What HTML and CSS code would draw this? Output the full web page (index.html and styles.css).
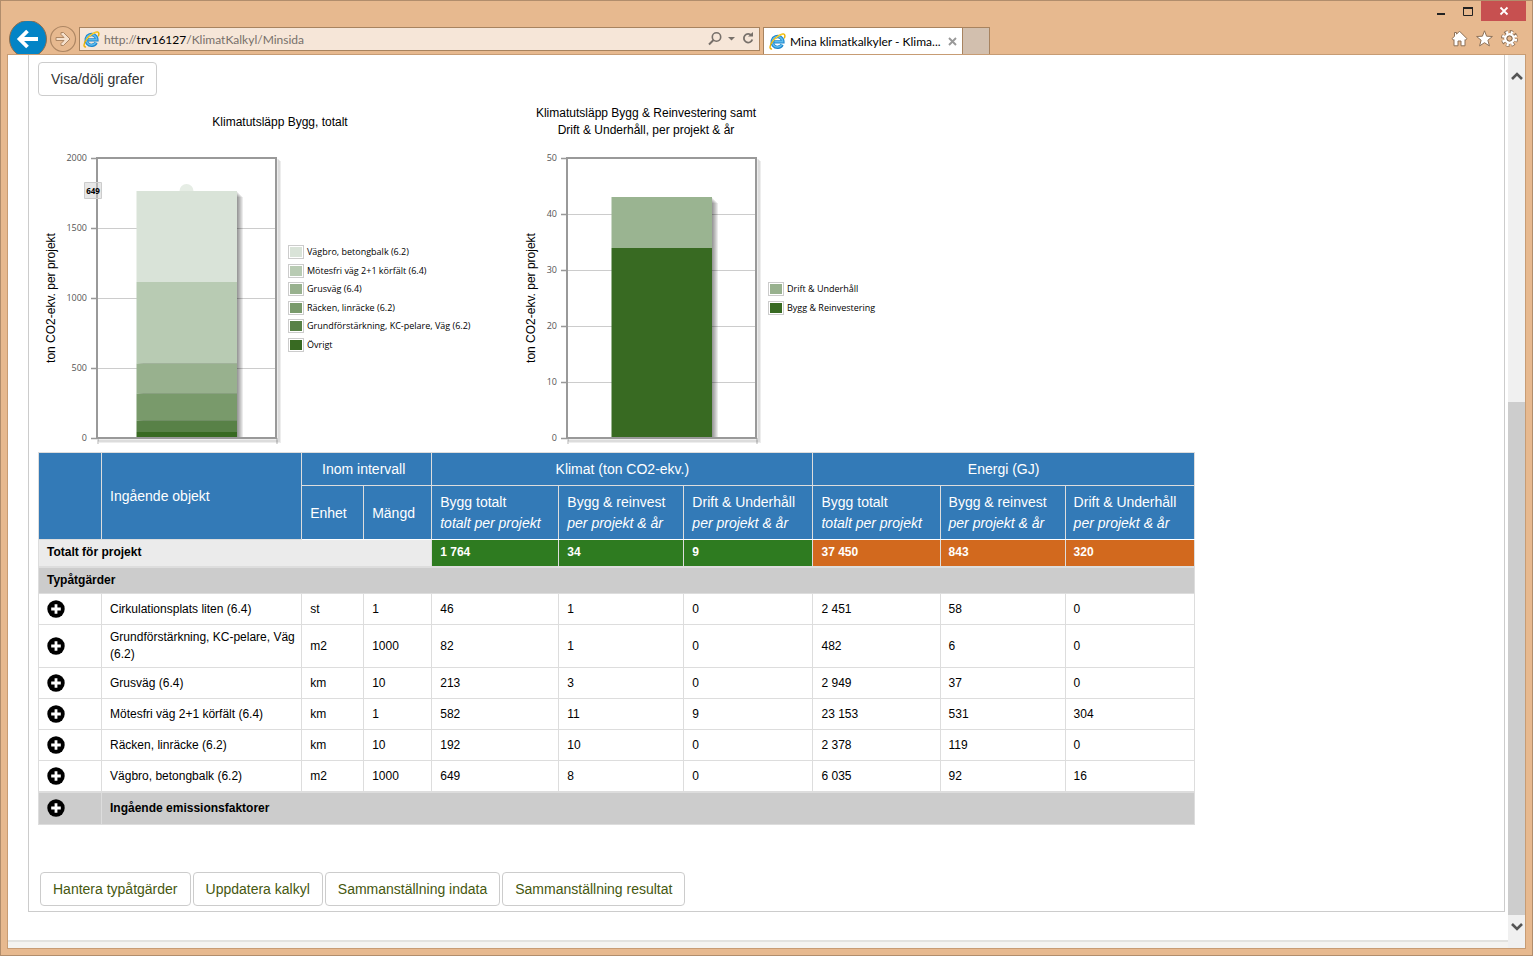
FILE: index.html
```html
<!DOCTYPE html>
<html lang="sv">
<head>
<meta charset="utf-8">
<title>Mina klimatkalkyler - Klimatkalkyl</title>
<link rel="stylesheet" href="styles.css">
</head>
<body>
<svg width="0" height="0" class="symbols" aria-hidden="true">
  <symbol id="ie" viewBox="0 0 17 17">
    <path d="M13.2 11.6A5.4 5.4 0 1 1 13.9 8.9H5" fill="none" stroke="#1f86cc" stroke-width="3.4"/>
    <path d="M13 11.4A5.2 5.2 0 1 1 13.7 8.7H5.4" fill="none" stroke="#5dbcee" stroke-width="1.6"/>
    <path d="M3 15.8C.2 16.6.4 12.600 3.600 8.400C7 3.800 12.800.2 15 1.200C16.300 1.800 16 3.800 15.200 5.300" fill="none" stroke="#eab308" stroke-width="1.500"/>
    <path d="M3.500 8.500C7 3.900 12.500.6 14.800 1.500" fill="none" stroke="#ffd83a" stroke-width="1"/>
  </symbol>
  <symbol id="plus" viewBox="0 0 18 18">
    <circle cx="9" cy="9" r="8.700" fill="#000"/>
    <path d="M9 4.200V13.800M4.200 9H13.800" stroke="#fff" stroke-width="2.800"/>
  </symbol>
</svg>

<div class="window">
  <header class="chrome">
    <div class="titlebar">
      <button class="win-btn" aria-label="Minimera"><svg width="12" height="12"><path d="M0 8H8V10H0Z" fill="#222"/></svg></button>
      <button class="win-btn" aria-label="Maximera"><svg width="12" height="12"><path d="M.5 3.500H9.500V10.500H.5Z" fill="none" stroke="#222"/><path d="M0 3H10" stroke="#222" stroke-width="2"/></svg></button>
      <button class="win-btn close" aria-label="Stäng"><svg width="10" height="10"><path d="M1.500 1.500L8.500 8.500M8.500 1.500L1.500 8.500" stroke="#fff" stroke-width="1.800"/></svg></button>
    </div>
    <div class="toolbar">
      <button class="nav" aria-label="Bakåt"><svg width="38" height="33"><circle cx="19" cy="18" r="18.500" fill="#0384c6" stroke="#8f6d4d"/><path d="M11 18H29M18.500 10L10.500 18L18.500 26" fill="none" stroke="#fff" stroke-width="3.800"/></svg></button>
      <button class="nav" aria-label="Framåt"><svg width="28" height="33"><circle cx="14" cy="18" r="12.500" fill="none" stroke="#ad8663" stroke-width="1.200"/><path d="M7 16.500H15L12 13.500V11.500H14.500L21 18L14.500 24.500H12V22.500L15 19.500H7Z" fill="#f5e0cc" stroke="#ad8663"/></svg></button>
      <div class="address">
        <svg width="17" height="17"><use href="#ie"/></svg>
        <div class="url" role="textbox" aria-label="Adress">http://<span class="host">trv16127</span>/KlimatKalkyl/Minsida</div>
        <button class="addr-btn" aria-label="Sök"><svg width="28" height="16"><circle cx="8.500" cy="6" r="4.200" fill="none" stroke="#77706a" stroke-width="1.600"/><path d="M5.500 9L1 13.500" stroke="#77706a" stroke-width="2"/><path d="M20 6H27L23.500 9.500Z" fill="#77706a"/></svg></button>
        <button class="addr-btn" aria-label="Uppdatera"><svg width="12" height="16"><path d="M9.500 4.500A4.300 4.300 0 1 0 10.300 8.500" fill="none" stroke="#77706a" stroke-width="1.800"/><path d="M6 5.500H11V1Z" fill="#77706a"/></svg></button>
      </div>
      <div class="tab">
        <svg width="17" height="17"><use href="#ie"/></svg>
        <span class="tab-title">Mina klimatkalkyler - Klima...</span>
        <button class="tab-close" aria-label="Stäng flik"><svg width="9" height="9"><path d="M1 1L8 8M8 1L1 8" stroke="#999" stroke-width="1.900"/></svg></button>
      </div>
      <button class="new-tab" aria-label="Ny flik"></button>
      <div class="tools">
        <button class="tool" aria-label="Start"><svg width="17" height="17"><path d="M8.500 1.200L16 8.700L14.600 10L14 9.500V15.800H10V11H7V15.800H3V9.500L2.400 10L1 8.700L3.500 6.200V2.500H5.500V4.200Z" fill="#fff" stroke="#8d7158"/></svg></button>
        <button class="tool" aria-label="Favoriter"><svg width="17" height="17"><path d="M8.500.8L10.600 6.200L16.400 6.500L11.900 10.200L13.400 15.900L8.500 12.700L3.600 15.900L5.100 10.200L.6 6.500L6.400 6.200Z" fill="#fff" stroke="#8d7158"/></svg></button>
        <button class="tool" aria-label="Verktyg"><svg width="17" height="17"><circle cx="8.500" cy="8.500" r="6.900" fill="none" stroke="#8d7158" stroke-width="3.200" stroke-dasharray="3.400 2.019"/><circle cx="8.500" cy="8.500" r="5.800" fill="#8d7158"/><circle cx="8.500" cy="8.500" r="6.300" fill="none" stroke="#fff" stroke-width="2.800" stroke-dasharray="2.200 2.748" stroke-dashoffset="-.5"/><circle cx="8.500" cy="8.500" r="4.200" fill="none" stroke="#fff" stroke-width="2.400"/><circle cx="8.500" cy="8.500" r="2.500" fill="#e7b98f" stroke="#8d7158"/></svg></button>
      </div>
    </div>
  </header>

  <div class="viewport">
    <div class="page">
      <main class="panel">
        <button class="btn">Visa/dölj grafer</button>

        <div class="charts">
          <figure class="chart chart-wide">
            <figcaption>Klimatutsläpp Bygg, totalt</figcaption>
            <svg class="plot" width="240" height="296">
              <g stroke="#ccc"><path d="M57 78.500H236M57 148.500H236M57 218.500H236"/></g>
              <g fill="#000" fill-opacity=".08">
                <path d="M98 42H198V288H98Z"/><path d="M99 43H199V288H99Z"/><path d="M100 44H200V288H100Z"/><path d="M101 45H201V288H101Z"/><path d="M102 46H202V288H102Z"/><path d="M103 47H203V288H103Z"/>
              </g>
              <g fill="none" stroke="#000" stroke-opacity=".07" stroke-width="2">
                <path d="M238 9V290H58"/><path d="M239 10V291H58"/><path d="M240 11V292H59"/><path d="M58 288V294M237 288V294" stroke-opacity=".15"/>
              </g>
              <path d="M57 8H236V288H57Z" fill="none" stroke="#999" stroke-width="2"/>
              <path d="M51 8.500H57M51 78.500H57M51 148.500H57M51 218.500H57M51 288.500H57" stroke="#999" stroke-width="1.500"/>
              <circle cx="146.500" cy="41" r="7" fill="#e6ede5"/>
              <path d="M96.500 41H197V132H96.500Z" fill="#d9e3d8"/>
              <path d="M96.500 132H197V213.500H96.500Z" fill="#b8cbb3"/>
              <path d="M96.500 213.500H197V243.500H96.500Z" fill="#98b18e"/>
              <path d="M96.500 243.500H197V270.500H96.500Z" fill="#799a6b"/>
              <path d="M96.500 270.500H197V282H96.500Z" fill="#588147"/>
              <path d="M96.500 282H197V287H96.500Z" fill="#386a22"/>
              <g class="ticks"><text x="47" y="11">2000</text><text x="47" y="81">1500</text><text x="47" y="151">1000</text><text x="47" y="221">500</text><text x="47" y="291">0</text></g>
              <path d="M44.500 32.500H61.500V48.500H44.500Z" fill="#d0d0d0" fill-opacity=".5" stroke="#ccc"/>
              <text class="mark" x="53" y="44">649</text>
              <text class="axis" transform="translate(15 148) rotate(-90)">ton CO2-ekv. per projekt</text>
            </svg>
            <ul class="legend">
              <li><span class="key k1"></span>Vägbro, betongbalk (6.2)</li>
              <li><span class="key k2"></span>Mötesfri väg 2+1 körfält (6.4)</li>
              <li><span class="key k3"></span>Grusväg (6.4)</li>
              <li><span class="key k4"></span>Räcken, linräcke (6.2)</li>
              <li><span class="key k5"></span>Grundförstärkning, KC-pelare, Väg (6.2)</li>
              <li><span class="key k6"></span>Övrigt</li>
            </ul>
          </figure>

          <figure class="chart">
            <figcaption>Klimatutsläpp Bygg &amp; Reinvestering samt<br>Drift &amp; Underhåll, per projekt &amp; år</figcaption>
            <svg class="plot" width="240" height="296">
              <g stroke="#ccc"><path d="M47 64.500H236M47 120.500H236M47 176.500H236M47 232.500H236"/></g>
              <g fill="#000" fill-opacity=".08">
                <path d="M93 48H193V288H93Z"/><path d="M94 49H194V288H94Z"/><path d="M95 50H195V288H95Z"/><path d="M96 51H196V288H96Z"/><path d="M97 52H197V288H97Z"/><path d="M98 53H198V288H98Z"/>
              </g>
              <g fill="none" stroke="#000" stroke-opacity=".07" stroke-width="2">
                <path d="M238 9V290H48"/><path d="M239 10V291H48"/><path d="M240 11V292H49"/><path d="M48 288V294M237 288V294" stroke-opacity=".15"/>
              </g>
              <path d="M47 8H236V288H47Z" fill="none" stroke="#999" stroke-width="2"/>
              <path d="M41 8.500H47M41 64.500H47M41 120.500H47M41 176.500H47M41 232.500H47M41 288.500H47" stroke="#999" stroke-width="1.500"/>
              <path d="M91.500 47H192V98H91.500Z" fill="#9ab491"/>
              <path d="M91.500 98H192V287H91.500Z" fill="#386a22"/>
              <g class="ticks"><text x="37" y="11">50</text><text x="37" y="67">40</text><text x="37" y="123">30</text><text x="37" y="179">20</text><text x="37" y="235">10</text><text x="37" y="291">0</text></g>
              <text class="axis" transform="translate(15 148) rotate(-90)">ton CO2-ekv. per projekt</text>
            </svg>
            <ul class="legend">
              <li><span class="key k3"></span>Drift &amp; Underhåll</li>
              <li><span class="key k6"></span>Bygg &amp; Reinvestering</li>
            </ul>
          </figure>
        </div>

        <table class="result">
          <colgroup><col class="c-icon"><col class="c-name"><col class="c-unit"><col class="c-qty"><col class="c-total"><col class="c-year"><col class="c-run"><col class="c-total"><col class="c-year"><col class="c-run"></colgroup>
          <thead>
            <tr><th rowspan="2"></th><th rowspan="2">Ingående objekt</th><th colspan="2" class="group inset">Inom intervall</th><th colspan="3" class="group">Klimat (ton CO2-ekv.)</th><th colspan="3" class="group">Energi (GJ)</th></tr>
            <tr><th>Enhet</th><th>Mängd</th><th>Bygg totalt<br><em>totalt per projekt</em></th><th>Bygg &amp; reinvest<br><em>per projekt &amp; år</em></th><th>Drift &amp; Underhåll<br><em>per projekt &amp; år</em></th><th>Bygg totalt<br><em>totalt per projekt</em></th><th>Bygg &amp; reinvest<br><em>per projekt &amp; år</em></th><th>Drift &amp; Underhåll<br><em>per projekt &amp; år</em></th></tr>
          </thead>
          <tbody class="sum">
            <tr><td colspan="4">Totalt för projekt</td><td class="climate">1 764</td><td class="climate">34</td><td class="climate">9</td><td class="energy">37 450</td><td class="energy">843</td><td class="energy">320</td></tr>
          </tbody>
          <tbody class="measures">
            <tr class="section"><td colspan="10">Typåtgärder</td></tr>
            <tr><td><button class="expand" aria-label="Visa"><svg width="18" height="18"><use href="#plus"/></svg></button></td><td>Cirkulationsplats liten (6.4)</td><td>st</td><td>1</td><td>46</td><td>1</td><td>0</td><td>2 451</td><td>58</td><td>0</td></tr>
            <tr><td><button class="expand" aria-label="Visa"><svg width="18" height="18"><use href="#plus"/></svg></button></td><td>Grundförstärkning, KC-pelare, Väg (6.2)</td><td>m2</td><td>1000</td><td>82</td><td>1</td><td>0</td><td>482</td><td>6</td><td>0</td></tr>
            <tr><td><button class="expand" aria-label="Visa"><svg width="18" height="18"><use href="#plus"/></svg></button></td><td>Grusväg (6.4)</td><td>km</td><td>10</td><td>213</td><td>3</td><td>0</td><td>2 949</td><td>37</td><td>0</td></tr>
            <tr><td><button class="expand" aria-label="Visa"><svg width="18" height="18"><use href="#plus"/></svg></button></td><td>Mötesfri väg 2+1 körfält (6.4)</td><td>km</td><td>1</td><td>582</td><td>11</td><td>9</td><td>23 153</td><td>531</td><td>304</td></tr>
            <tr><td><button class="expand" aria-label="Visa"><svg width="18" height="18"><use href="#plus"/></svg></button></td><td>Räcken, linräcke (6.2)</td><td>km</td><td>10</td><td>192</td><td>10</td><td>0</td><td>2 378</td><td>119</td><td>0</td></tr>
            <tr><td><button class="expand" aria-label="Visa"><svg width="18" height="18"><use href="#plus"/></svg></button></td><td>Vägbro, betongbalk (6.2)</td><td>m2</td><td>1000</td><td>649</td><td>8</td><td>0</td><td>6 035</td><td>92</td><td>16</td></tr>
          </tbody>
          <tbody class="factors">
            <tr class="section"><td><button class="expand" aria-label="Visa"><svg width="18" height="18"><use href="#plus"/></svg></button></td><td colspan="9">Ingående emissionsfaktorer</td></tr>
          </tbody>
        </table>

        <div class="actions">
          <button class="btn link">Hantera typåtgärder</button>
          <button class="btn link">Uppdatera kalkyl</button>
          <button class="btn link">Sammanställning indata</button>
          <button class="btn link">Sammanställning resultat</button>
        </div>
      </main>
      <div class="page-footer"></div>
    </div>
    <div class="scrollbar">
      <button class="scroll-btn up" aria-label="Upp"><svg width="12" height="10"><path d="M1 8L6 3L11 8" fill="none" stroke="#555" stroke-width="2.600"/></svg></button>
      <div class="track"><div class="thumb"></div></div>
      <button class="scroll-btn down" aria-label="Ned"><svg width="12" height="10"><path d="M1 2L6 7L11 2" fill="none" stroke="#555" stroke-width="2.600"/></svg></button>
    </div>
  </div>
</div>
</body>
</html>
```
FILE: styles.css
```css
* { box-sizing: border-box; }

body {
  margin: 0;
  font: 12px/17px "Liberation Sans", Arial, sans-serif;
  color: #000;
}

button {
  margin: 0;
  padding: 0;
  border: 0;
  background: none;
  font: inherit;
  color: inherit;
}

svg { display: block; flex: none; }
.symbols { position: absolute; }

/* Browser window */
.window {
  display: flex;
  flex-direction: column;
  height: 100vh;
  padding: 0 6px;
  border: 1px solid #b18d6c;
  border-bottom: 0;
  background: #e7b98f;
  box-shadow: inset 0 -1px #b18d6c;
  padding-bottom: 7px;
  overflow: hidden;
}

.chrome { flex: none; font: 12px/17px Lato, "Open Sans", sans-serif; }

.titlebar {
  display: flex;
  justify-content: flex-end;
  height: 20px;
}

.win-btn {
  display: flex;
  align-items: center;
  width: 26px;
  height: 20px;
}

.win-btn.close {
  justify-content: center;
  width: 45px;
  margin-left: -8px;
  background: #c75050;
}

.toolbar {
  display: flex;
  align-items: flex-start;
  height: 33px;
  padding-left: 2px;
}

.nav { margin-right: 2px; }

.address {
  display: flex;
  align-items: center;
  flex: 0 1 681px;
  height: 24px;
  margin: 6px 3px 0 0;
  padding: 0 5px 0 3px;
  border: 1px solid #a8835f;
  background: #f6e6d8;
}

.url {
  flex: 1;
  margin-left: 4px;
  color: #77706a;
  white-space: nowrap;
}

.host { color: #000; }
.addr-btn { margin-left: 6px; }

.tab {
  display: flex;
  align-items: center;
  width: 200px;
  height: 27px;
  margin-top: 6px;
  padding: 0 5px;
  border: 1px solid #a8835f;
  border-bottom: 0;
  background: #fff;
}

.tab-title { flex: 1; margin-left: 4px; white-space: nowrap; }

.new-tab {
  width: 27px;
  height: 27px;
  margin-top: 6px;
  border: 1px solid #a8835f;
  border-width: 1px 1px 0 0;
  background: #d2bfae;
}

.tools {
  display: flex;
  gap: 8px;
  margin: 9px 8px 0 auto;
}

/* Page area */
.viewport {
  display: flex;
  flex: 1;
  min-height: 0;
  border: 1px solid #c79c74;
  background: #fff;
}

.page {
  display: flex;
  flex-direction: column;
  flex: 1;
  min-width: 0;
  overflow: hidden;
}

.panel {
  margin: 0 3px 0 20px;
  padding: 7px 20px 5px 9px;
  border: 1px solid #ccc;
  border-top: 0;
}

.page-footer {
  height: 8px;
  margin-top: auto;
  border-top: 2px solid #e2e2df;
  background: #f4f3f0;
}

.btn {
  padding: 6px 12px;
  border: 1px solid #ccc;
  border-radius: 4px;
  background: #fff;
  color: #333;
  font-size: 14px;
  line-height: 20px;
  white-space: nowrap;
}

.btn.link { color: #46580f; }

/* Charts */
.charts {
  display: flex;
  height: 356px;
  padding-left: 2px;
}

.chart {
  display: grid;
  grid-template: 54px 296px / 248px auto;
  align-content: start;
  margin: 0;
}

.chart-wide { grid-template-columns: 248px 232px; }
.chart-wide figcaption { grid-column: 1 / -1; }

figcaption {
  align-self: center;
  padding: 0 0 2px 4px;
  text-align: center;
}

.chart-wide figcaption { padding-left: 0; }

.plot { grid-row: 2; overflow: visible; }

.ticks {
  font: 9px "Open Sans", "Noto Sans", sans-serif;
  fill: #555;
  text-anchor: end;
}

.mark {
  font: bold 8px "Open Sans", "Noto Sans", sans-serif;
  text-anchor: middle;
}

.axis { font-size: 12px; text-anchor: middle; }

.legend {
  grid-row: 2;
  align-self: center;
  margin: 0;
  padding: 0;
  list-style: none;
  font: 9px/18px "Open Sans", "Noto Sans", sans-serif;
}

.legend li {
  display: flex;
  align-items: center;
  gap: 3px;
  white-space: nowrap;
}

.legend li:nth-child(even) { padding-top: 1px; }

.key {
  width: 16px;
  height: 14px;
  padding: 1px;
  border: 1px solid #ccc;
  background-clip: content-box;
}

.k1 { background-color: #d9e3d8; }
.k2 { background-color: #b8cbb3; }
.k3 { background-color: #98b18e; }
.k4 { background-color: #799a6b; }
.k5 { background-color: #588147; }
.k6 { background-color: #386a22; }

/* Result table */
.result {
  width: 80%;
  table-layout: fixed;
  border-collapse: collapse;
}

.c-icon { width: 63px; }
.c-name { width: 200px; }
.c-unit { width: 62px; }
.c-qty { width: 68px; }
.c-total { width: 127px; }
.c-year { width: 125px; }
.c-run { width: 129px; }

.result th,
.result td {
  border: 1px solid #ddd;
  text-align: left;
  vertical-align: middle;
}

.result th {
  padding: 6px 8px 5px;
  background: #337ab7;
  color: #fff;
  font-size: 14px;
  font-weight: normal;
  line-height: 21px;
}

.result thead tr + tr th { border-top-color: #fff; border-bottom-color: #fff; }
.result th.group { text-align: center; }
.result th.inset { padding-right: 14px; }

.result td { padding: 4px 6px 4px 8px; }

.result .sum td { padding-bottom: 5px; background: #ebebeb; font-weight: bold; }
.result .sum .climate { background: #2e7b20; color: #fff; }
.result .sum .energy { background: #d2691e; color: #fff; }

.result tbody + tbody { border-top: 2px solid #ddd; }
.result .section td { background: #ccc; font-weight: bold; }
.result .factors td { padding-bottom: 5px; }

.expand { display: block; margin: 2px 0; }

.actions {
  display: flex;
  gap: 2px;
  margin-top: 47px;
  padding-left: 2px;
}

/* Scrollbar */
.scrollbar {
  display: flex;
  flex-direction: column;
  width: 17px;
  background: #f0f0f0;
}

.scroll-btn {
  display: flex;
  justify-content: center;
  height: 26px;
}

.scroll-btn.up { align-items: flex-end; }
.scroll-btn.down { align-items: center; height: 33px; padding-bottom: 10px; }

.track {
  display: flex;
  align-items: flex-end;
  flex: 1;
}

.thumb {
  width: 100%;
  height: 61.500%;
  background: #cdcdcd;
}
```
